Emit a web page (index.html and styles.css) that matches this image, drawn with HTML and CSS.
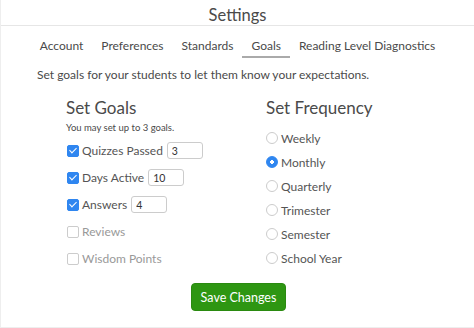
FILE: index.html
```html
<!DOCTYPE html>
<html>
<head>
<meta charset="utf-8">
<link rel="stylesheet" href="styles.css">
</head>
<body>
<div class="page">
  <header class="title">Settings</header>
  <nav class="tabs">
    <span class="tab">Account</span>
    <span class="tab">Preferences</span>
    <span class="tab">Standards</span>
    <span class="tab active">Goals</span>
    <span class="tab">Reading Level Diagnostics</span>
  </nav>
  <p class="intro">Set goals for your students to let them know your expectations.</p>
  <div class="cols">
    <section class="col goals">
      <h2>Set Goals</h2>
      <p class="hint">You may set up to 3 goals.</p>
      <label class="row"><input type="checkbox" class="cb" checked><span>Quizzes Passed</span><input type="text" class="num w1" value="3"></label>
      <label class="row"><input type="checkbox" class="cb" checked><span>Days Active</span><input type="text" class="num w1" value="10"></label>
      <label class="row"><input type="checkbox" class="cb" checked><span>Answers</span><input type="text" class="num w1" value="4"></label>
      <label class="row off"><input type="checkbox" class="cb" disabled><span>Reviews</span></label>
      <label class="row off"><input type="checkbox" class="cb" disabled><span>Wisdom Points</span></label>
    </section>
    <section class="col freq">
      <h2>Set Frequency</h2>
      <label class="rrow"><input type="radio" name="f" class="rb"><span>Weekly</span></label>
      <label class="rrow"><input type="radio" name="f" class="rb" checked><span>Monthly</span></label>
      <label class="rrow"><input type="radio" name="f" class="rb"><span>Quarterly</span></label>
      <label class="rrow"><input type="radio" name="f" class="rb"><span>Trimester</span></label>
      <label class="rrow"><input type="radio" name="f" class="rb"><span>Semester</span></label>
      <label class="rrow"><input type="radio" name="f" class="rb"><span>School Year</span></label>
    </section>
  </div>
  <div class="actions"><button class="save">Save Changes</button></div>
</div>
</body>
</html>
```
FILE: styles.css
```css
html, body { margin: 0; padding: 0; background: #fff; }
body { font-family: "Lato", "Open Sans", sans-serif; color: #555; }
.page { width: 474px; height: 328px; box-sizing: border-box; border-left: 1px solid #eee; border-bottom: 1px solid #eee; overflow: hidden; }
.title { height: 26px; box-sizing: border-box; border-bottom: 1px solid #e6e6e6; text-align: center; font-size: 16.5px; line-height: 26px; color: #4a4a4a; padding-top: 2px; }
.tabs { display: flex; justify-content: center; margin-top: 7px; height: 25px; }
.tab { font-size: 12px; padding: 4px 9px 0; line-height: 17px; color: #4a4a4a; }
.tab.active { border-bottom: 2px solid #aaa; }
.intro { margin: 9px 0 0 36px; font-size: 12px; line-height: 16px; color: #4a4a4a; }
.cols { display: grid; grid-template-columns: 200px 200px; margin: 14px 0 0 65px; }
h2 { margin: 0; font-weight: 400; font-size: 17px; line-height: 22px; color: #4a4a4a; }
.hint { margin: 2px 0 3px; font-size: 9.5px; line-height: 13px; color: #4a4a4a; }
.row { display: flex; align-items: center; height: 27px; font-size: 12px; }
.row.off { color: #999; }
.cb { appearance: none; -webkit-appearance: none; width: 12px; height: 12px; margin: 0 3px 0 1px; border: 1px solid #ccc; border-radius: 2px; box-sizing: border-box; background: #fff; position: relative; }
.cb:checked { background: #2f86f0; border-color: #2f86f0; }
.cb:checked::after { content: ""; position: absolute; left: 3px; top: 0px; width: 3px; height: 6px; border: solid #fff; border-width: 0 1.5px 1.5px 0; transform: rotate(45deg); }
.num { width: 36px; height: 17px; box-sizing: border-box; margin-left: 4px; border: 1px solid #ccc; border-radius: 3px; font-family: "Lato", sans-serif; font-size: 10.5px; padding: 0 0 0 4px; color: #333; }
.freq h2 { margin-bottom: 7px; }
.rrow { display: flex; align-items: center; height: 24px; font-size: 12px; }
.rb { appearance: none; -webkit-appearance: none; width: 12px; height: 12px; margin: 0 3px 0 0; border: 1px solid #ccc; border-radius: 50%; box-sizing: border-box; background: #fff; }
.rb:checked { border-color: #2f86f0; background: radial-gradient(circle, #fff 0 1.6px, #2f86f0 2px); }
.actions { display: flex; justify-content: center; margin-top: 11px; padding-left: 2px; }
.save { background: #2e9612; color: #fff; border: 1px solid #2a8a10; border-radius: 4px; font-family: "Lato", sans-serif; font-size: 12.5px; height: 28px; padding: 0 9px; }
```
